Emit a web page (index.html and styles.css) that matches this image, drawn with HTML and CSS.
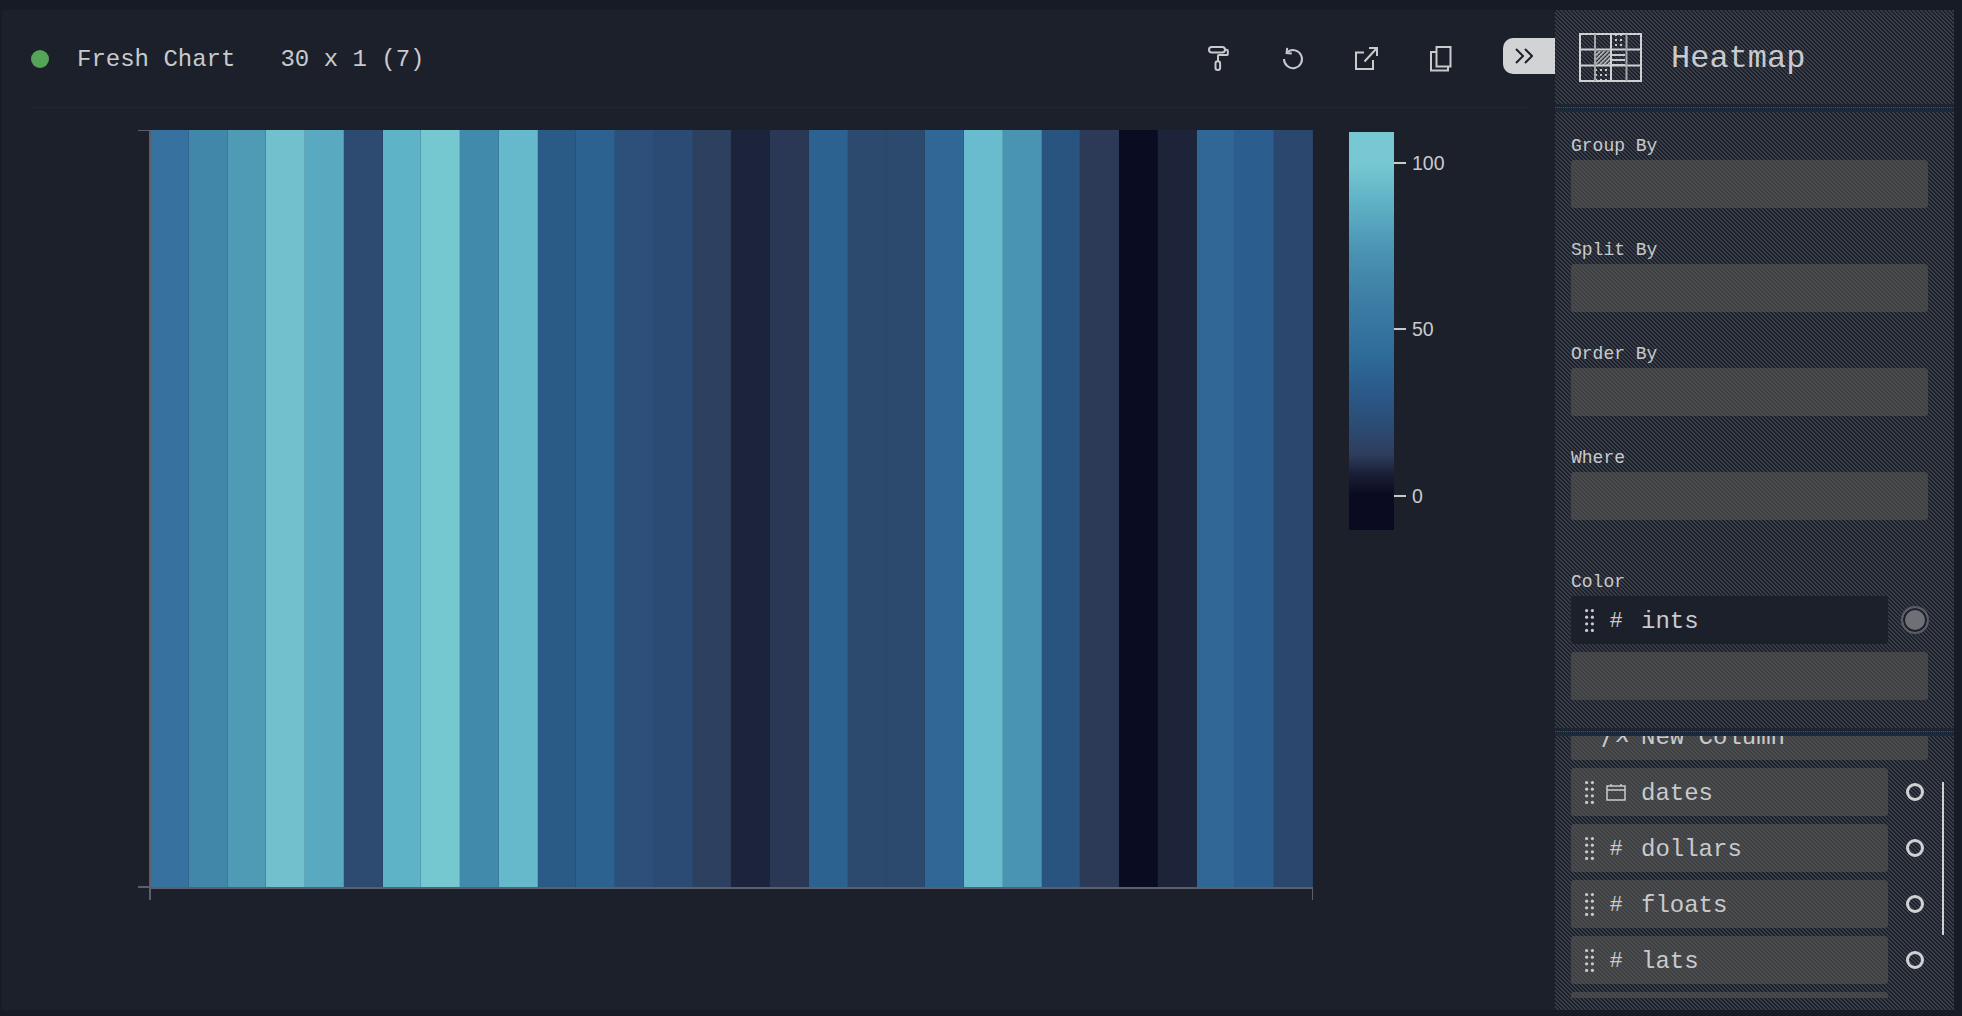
FILE: index.html
```html
<!DOCTYPE html>
<html lang="en">
<head>
<meta charset="utf-8">
<title>Fresh Chart</title>
<link rel="stylesheet" href="styles.css">
</head>
<body>
<svg class="defs" width="0" height="0" aria-hidden="true">
  <defs>
    <symbol id="grip" viewBox="0 0 9 23">
      <circle cx="1.6" cy="1.6" r="1.6"/><circle cx="7.4" cy="1.6" r="1.6"/>
      <circle cx="1.6" cy="8.2" r="1.6"/><circle cx="7.4" cy="8.2" r="1.6"/>
      <circle cx="1.6" cy="14.8" r="1.6"/><circle cx="7.4" cy="14.8" r="1.6"/>
      <circle cx="1.6" cy="21.4" r="1.6"/><circle cx="7.4" cy="21.4" r="1.6"/>
    </symbol>
  </defs>
</svg>
<main class="main">
  <header class="topbar">
    <span class="status"></span>
    <span class="title">Fresh Chart</span>
    <span class="dims">30 x 1 (7)</span>
    <div class="tools">
      <span class="tool"><svg class="ico ico-heavy" width="22" height="25" viewBox="0 0 22 25"><rect x="1" y="1" width="16" height="5.5" rx="2.7"/><path d="M17 3.7h1.6q1.2 0 1.2 1.2v3q0 1.2-1.2 1.2H10.6q-.6 0-.6.6V15"/><rect x="7.5" y="15.2" width="4.6" height="8.8" rx="2.2"/></svg></span>
      <span class="tool"><svg class="ico ico-heavy" width="24" height="28" viewBox="0 0 24 28"><path d="M3 14A9 9 0 1 0 6.5 7"/><path d="M6.2 2.8 5.6 8l5.2.6"/></svg></span>
      <span class="tool"><svg class="ico ico-heavy" width="24" height="24" viewBox="0 0 24 24"><path d="M9 5.5H1V22H18V13"/><path d="M9.5 14.5 21.5 1.5M14 1H22V9"/></svg></span>
      <span class="tool"><svg class="ico ico-heavy" width="22" height="26" viewBox="0 0 22 26"><rect x="6.5" y="1" width="14" height="19.5"/><path d="M6.5 6H1V24.5H18V20.5"/></svg></span>
    </div>
    <button class="collapse" type="button" aria-label="Collapse"><svg class="chev" width="18" height="16" viewBox="0 0 18 16"><path d="M1 1 8 8 1 15M10 1 17 8 10 15"/></svg></button>
  </header>
  <div class="rule"></div>
  <section class="chart">
    <div class="plot">
      <i class="tick tick-top"></i><i class="tick tick-left"></i><i class="tick tick-x0"></i><i class="tick tick-x1"></i>
      <div class="bars">
        <div class="bar" style="background:#36719f"></div>
        <div class="bar" style="background:#4187a9"></div>
        <div class="bar" style="background:#4f9bb6"></div>
        <div class="bar" style="background:#70c0cd"></div>
        <div class="bar" style="background:#59aac0"></div>
        <div class="bar" style="background:#2d4a70"></div>
        <div class="bar" style="background:#5fb3c6"></div>
        <div class="bar" style="background:#75c7d0"></div>
        <div class="bar" style="background:#418aab"></div>
        <div class="bar" style="background:#66b9ca"></div>
        <div class="bar" style="background:#2a5a86"></div>
        <div class="bar" style="background:#2c628f"></div>
        <div class="bar" style="background:#2c5079"></div>
        <div class="bar" style="background:#2b4b74"></div>
        <div class="bar" style="background:#2e405f"></div>
        <div class="bar" style="background:#1b243a"></div>
        <div class="bar" style="background:#2a3855"></div>
        <div class="bar" style="background:#2c6290"></div>
        <div class="bar" style="background:#2c4a6e"></div>
        <div class="bar" style="background:#2c4a6e"></div>
        <div class="bar" style="background:#2f6896"></div>
        <div class="bar" style="background:#69bccd"></div>
        <div class="bar" style="background:#4993b3"></div>
        <div class="bar" style="background:#2a5480"></div>
        <div class="bar" style="background:#2c3a58"></div>
        <div class="bar" style="background:#0a0c22"></div>
        <div class="bar" style="background:#1d2339"></div>
        <div class="bar" style="background:#2f6896"></div>
        <div class="bar" style="background:#2b5e8e"></div>
        <div class="bar" style="background:#2c476e"></div>
      </div>
    </div>
    <div class="legend">
      <div class="ramp"></div>
      <div class="lg lg-100"><i></i><span>100</span></div>
      <div class="lg lg-50"><i></i><span>50</span></div>
      <div class="lg lg-0"><i></i><span>0</span></div>
    </div>
  </section>
</main>
<aside class="side">
  <div class="side-head hatch">
    <svg class="hm-ico" width="63" height="49" viewBox="0 0 63 49">
      <defs>
        <pattern id="pd" width="5" height="5" patternUnits="userSpaceOnUse"><rect x="1" y="1" width="2" height="2" fill="#c9cacc"/></pattern>
        <pattern id="ph" width="3" height="3" patternUnits="userSpaceOnUse" patternTransform="rotate(45)"><rect width="1.5" height="3" fill="#c9cacc"/></pattern>
        <pattern id="pl" width="5" height="5" patternUnits="userSpaceOnUse"><rect y="1" width="5" height="2" fill="#c9cacc"/></pattern>
      </defs>
      <rect x="33" y="2" width="13" height="14" fill="url(#pd)"/>
      <rect x="17" y="18" width="14" height="14" fill="url(#ph)"/>
      <rect x="33" y="18" width="13" height="14" fill="url(#pl)"/>
      <rect x="17" y="34" width="14" height="13" fill="url(#pd)"/>
      <path class="hm-grid" d="M1 1H62V48H1ZM1 16.5H62M1 32.5H62M32 1V48"/>
      <path class="hm-grid hm-soft" d="M16 1V48M47.5 1V48"/>
    </svg>
    <span class="side-title">Heatmap</span>
  </div>
  <div class="divider"></div>
  <div class="config hatch">
    <div class="group"><label class="lab">Group By</label><div class="well field"></div></div>
    <div class="group"><label class="lab">Split By</label><div class="well field"></div></div>
    <div class="group"><label class="lab">Order By</label><div class="well field"></div></div>
    <div class="group"><label class="lab">Where</label><div class="well field"></div></div>
    <div class="group group-color">
      <label class="lab">Color</label>
      <div class="row">
        <div class="item item-active"><svg class="grip"><use href="#grip"/></svg><span class="type hash">#</span><span class="name">ints</span></div>
        <span class="radio-on"></span>
      </div>
      <div class="well field field-next"></div>
    </div>
  </div>
  <div class="divider divider-low"></div>
  <div class="columns hatch">
    <div class="list">
      <div class="well newcol"><span class="type fx">ƒx</span><span class="name">New Column</span></div>
      <div class="row"><div class="item well"><svg class="grip"><use href="#grip"/></svg><span class="type"><svg class="cal" width="20" height="18" viewBox="0 0 20 18"><path d="M1 3H19V17H1ZM1 7H19M5 1V3M15 1V3"/></svg></span><span class="name">dates</span></div><span class="radio"></span></div>
      <div class="row"><div class="item well"><svg class="grip"><use href="#grip"/></svg><span class="type hash">#</span><span class="name">dollars</span></div><span class="radio"></span></div>
      <div class="row"><div class="item well"><svg class="grip"><use href="#grip"/></svg><span class="type hash">#</span><span class="name">floats</span></div><span class="radio"></span></div>
      <div class="row"><div class="item well"><svg class="grip"><use href="#grip"/></svg><span class="type hash">#</span><span class="name">lats</span></div><span class="radio"></span></div>
      <div class="row"><div class="item well"></div></div>
    </div>
    <i class="scrollbar"></i>
  </div>
</aside>
</body>
</html>
```
FILE: styles.css
```css
* { box-sizing: border-box; }
html, body { margin: 0; height: 100%; }
body {
  display: flex;
  height: 1016px;
  padding: 10px 8px 6px 2px;
  overflow: hidden;
  background: #171b26;
  color: #c9cacc;
  font-family: "Liberation Mono", "DejaVu Sans Mono", monospace;
}
.defs { position: absolute; }
.main { flex: 1; min-width: 0; background: #1c202b; }

.topbar { display: flex; align-items: center; height: 97px; padding-left: 29px; }
.status { width: 18px; height: 18px; border-radius: 50%; background: #56a457; margin-right: 28px; }
.title, .dims { font-size: 24px; padding-top: 2px; white-space: pre; }
.dims { margin-left: 45px; }
.tools { display: flex; gap: 34px; margin-left: auto; margin-right: 42px; }
.tool { display: flex; width: 40px; justify-content: center; align-items: center; }
.ico { fill: none; stroke: #c9cacc; stroke-width: 1.5; }
.ico-heavy { stroke-width: 2; }
.collapse {
  width: 52px; height: 36px; margin-bottom: 5px; padding: 0 0 0 12px;
  display: flex; align-items: center;
  border: 0; border-radius: 10px 0 0 10px; background: #d2d3d5;
}
.chev { fill: none; stroke: #1c202b; stroke-width: 2; }
.rule { height: 1px; margin: 0 24px 0 26px; background: #1a2836; }

.chart { display: flex; align-items: flex-start; padding: 22px 0 0 147px; }
.plot {
  position: relative; width: 1164px; height: 759px;
  border-left: 2px solid #5c5f6b; border-bottom: 2px solid #5c5f6b;
}
.bars { display: flex; height: 100%; margin: 0 0 0 -1px; }
.bar { flex: 1; border-right: 1px solid rgba(30, 50, 80, .18); }
.plot::before { content: ""; position: absolute; left: -2px; top: 0; bottom: 0; width: 2px; background: #5c5f6b; z-index: 1; }
.tick { position: absolute; background: #5c5f6b; }
.tick-top { left: -13px; top: 0; width: 11px; height: 1px; }
.tick-left { left: -13px; bottom: -1px; width: 11px; height: 2px; }
.tick-x0 { left: -2px; bottom: -13px; width: 2px; height: 11px; }
.tick-x1 { right: 0; bottom: -13px; width: 1px; height: 11px; }

.legend { position: relative; width: 45px; height: 398px; margin: 2px 0 0 36px; }
.ramp {
  height: 100%;
  background: linear-gradient(#77c8d2 0, #77c8d2 8%, #61b3c7 17%, #4a93b3 30%, #3d7ea5 42%, #2e6a98 57%, #2a5a8a 65%, #2c4a70 75%, #2e3d5e 81%, #1a1e36 86%, #0a0b20 91%, #0a0b20 100%);
}
.lg { position: absolute; left: 45px; display: flex; align-items: center; height: 20px; }
.lg i { width: 12px; height: 2px; background: #c9cacc; margin-right: 6px; }
.lg span { font: 19.5px "Liberation Sans", Arial, sans-serif; color: #c9cacc; }
.lg-100 { top: 21px; }
.lg-50 { top: 187px; }
.lg-0 { top: 354px; }

.side { display: flex; flex-direction: column; width: 399px; background: #1c202b; }
.hatch {
  background-color: #1c202b;
  background-image: linear-gradient(45deg, #3a3e48 25%, transparent 25%, transparent 50%, #3a3e48 50%, #3a3e48 75%, transparent 75%);
  background-size: 4px 4px;
}
.side-head { display: flex; align-items: center; gap: 29px; height: 94px; padding: 0 0 0 24px; }
.hm-ico { fill: none; margin-top: 1px; }
.hm-grid { fill: none; stroke: #d0d1d3; stroke-width: 2; }
.hm-soft { stroke: #a5a6a9; }
.side-title { font-size: 32px; padding-top: 3px; }
.divider { height: 8px; background: #1a2a3a; border-top: 3px solid #1c2430; }
.divider::after { content: ""; display: block; height: 1px; border-top: 1px dotted #47505c; }
.config { flex: none; height: 616px; padding: 24px 26px 0 16px; }
.group { margin-bottom: 32px; }
.lab { display: block; height: 21px; line-height: 21px; font-size: 18px; }
.well {
  border-radius: 3px;
  background-color: #3d4044;
  background-image: linear-gradient(45deg, #4c4c4d 25%, transparent 25%, transparent 50%, #4c4c4d 50%, #4c4c4d 75%, transparent 75%);
  background-size: 4px 4px;
}
.field { height: 48px; margin-top: 3px; }
.group-color { margin-top: 52px; margin-bottom: 0; }
.field-next { margin-top: 8px; }
.row { display: flex; align-items: center; margin-top: 3px; height: 48px; }
.item { flex: none; display: flex; align-items: center; width: 317px; height: 48px; padding-left: 14px; border-radius: 3px; }
.item-active { background: #1c202b; }
.grip { width: 9px; height: 23px; fill: #c9cacc; flex: none; }
.type { display: flex; justify-content: center; align-items: center; width: 24px; margin: 0 13px 0 10px; font-size: 22px; line-height: 1; }
.hash { padding-top: 3px; }
.name { font-size: 24px; line-height: 1; padding-top: 3px; }
.cal { fill: none; stroke: #c9cacc; stroke-width: 1.5; }
.radio { flex: none; width: 18px; height: 18px; margin-left: 18px; border: 3px solid #d0d1d3; border-radius: 50%; }
.radio-on { flex: none; width: 28px; height: 28px; margin-left: 13px; border: 2px solid #5a5d66; border-radius: 50%; background: #6e7076; box-shadow: inset 0 0 0 2px #1c202b; }

.divider-low { height: 8px; }
.columns { position: relative; flex: 1; min-height: 0; padding: 0 26px 12px 16px; }
.list { height: 262px; overflow: hidden; }
.newcol { display: flex; align-items: center; height: 48px; margin-top: -24px; padding-left: 14px; }
.fx { font-style: italic; margin-left: 19px; margin-right: 13px; width: 24px; font-size: 24px; }
.list .row { margin-top: 8px; }
.scrollbar { position: absolute; left: 387px; top: 46px; width: 2px; height: 153px; background: #d0d1d3; }
```
